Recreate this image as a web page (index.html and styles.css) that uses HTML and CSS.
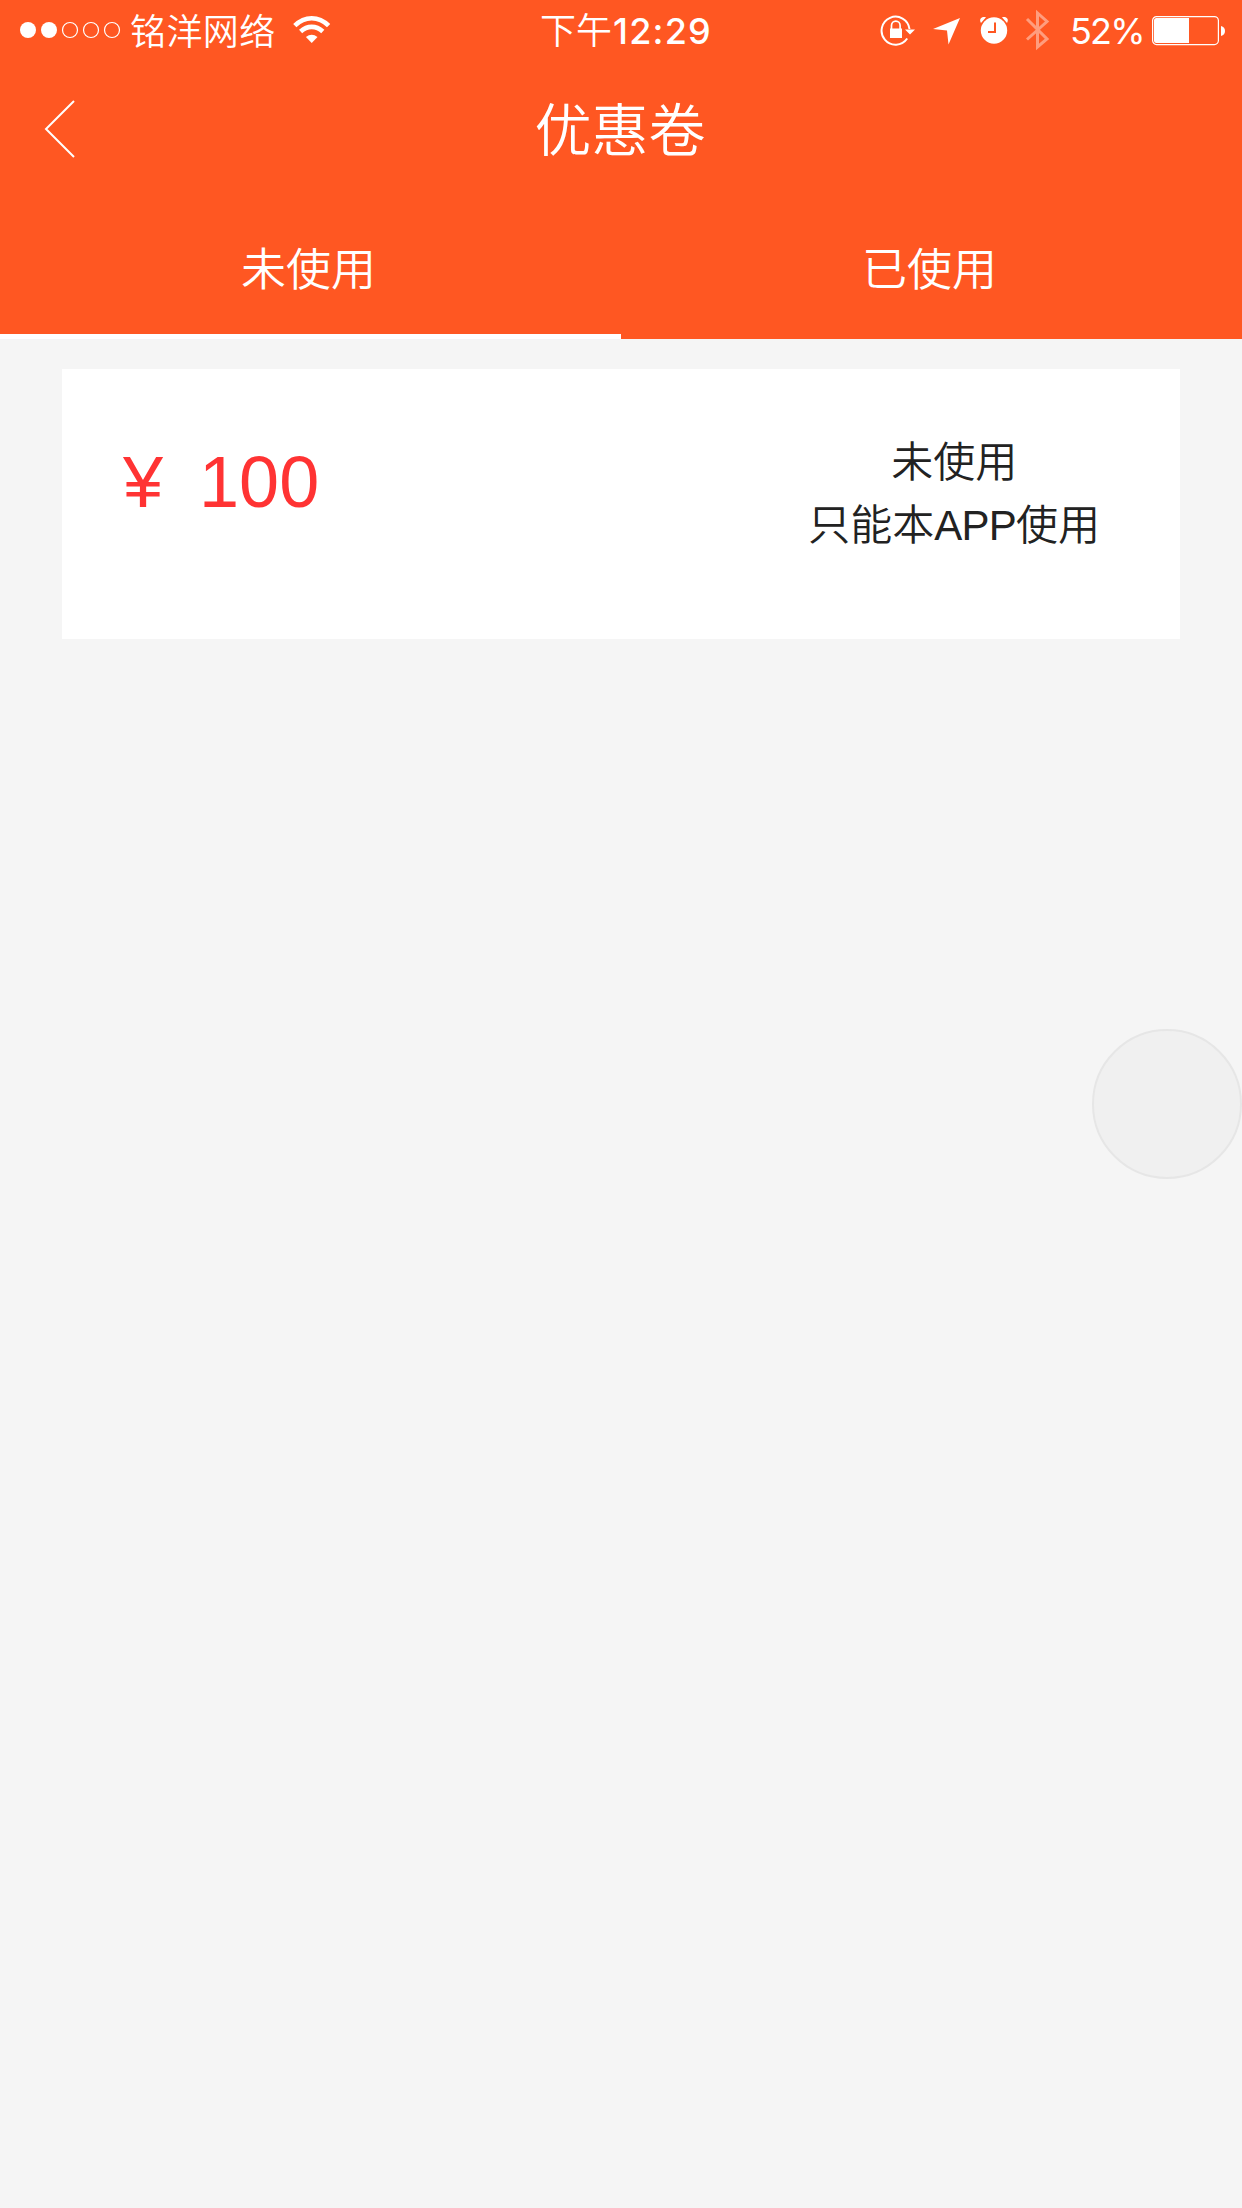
FILE: index.html
```html
<!DOCTYPE html>
<html lang="zh-CN">
<head>
<meta charset="utf-8">
<title>优惠卷</title>
<link rel="stylesheet" href="styles.css">
</head>
<body>
<header class="header">
  <div class="status">
    <div class="status-left">
      <svg class="signal" width="102" height="18" viewBox="0 0 102 18">
        <circle cx="9" cy="9" r="8" fill="#fff"/><circle cx="30" cy="9" r="8" fill="#fff"/>
        <g fill="none" stroke="#fff" stroke-width="1.200"><circle cx="51" cy="9" r="7.5"/><circle cx="72" cy="9" r="7.5"/><circle cx="93" cy="9" r="7.5"/></g>
      </svg>
      <span class="carrier">铭洋网络</span>
      <svg class="wifi" width="38" height="28" viewBox="0 0 38 28">
        <g fill="none" stroke="#fff" stroke-width="4.6"><path d="M1.8 9.7Q9.3 2.3 18.7 2.3T35.600 9.700"/><path d="M7.600 15.500Q12.600 10.900 18.700 10.900T29.800 15.500"/></g>
        <path d="M12.900 21Q18.700 16.300 24.500 21L18.700 27Z" fill="#fff"/>
      </svg>
    </div>
    <div class="time">下午<span class="clock">12:29</span></div>
    <div class="status-right">
      <svg class="indicators" width="170" height="44" viewBox="0 0 170 44">
        <g fill="none" stroke="#fff" stroke-width="2"><path d="M29.500 21A14 14 0 1 0 27.200 30.500"/><path d="M11.500 21V17.500a4.300 4.300 0 0 1 8.600 0V21" stroke-width="1.700"/></g>
        <path d="M10 20.500H22V30H10ZM25 21.500H35L30 26.500Z" fill="#fff"/>
        <path d="M53 21L80 10L68.500 36.500L67 22.500Z" fill="#fff"/>
        <circle cx="114" cy="22.500" r="13.200" fill="#fff"/>
        <path d="M101 15C98.500 10.500 102 8 106 9.200ZM127 15C129.500 10.500 126 8 122 9.200Z" fill="#fff"/>
        <path d="M115 14.500V24H108" fill="none" stroke="#ff5722" stroke-width="2"/>
        <path d="M147 11L167 31L157.500 39V5L167 13.500L147 31.500" fill="none" stroke="#fff" stroke-opacity=".42" stroke-width="3"/>
      </svg>
      <span class="percent">52%</span>
      <svg class="battery" width="74" height="30" viewBox="0 0 74 30">
        <rect x=".6" y=".6" width="65.800" height="28" rx="4" fill="none" stroke="#fff" stroke-width="1.200"/>
        <path d="M4.500 2H37V27H4.500Q2 27 2 24.500V4.500Q2 2 4.500 2Z" fill="#fff"/>
        <path d="M69 10Q73 11 73 15T69 20Z" fill="#fff"/>
      </svg>
    </div>
  </div>
  <div class="nav">
    <svg class="back" width="32" height="58" viewBox="0 0 32 58"><path d="M30 1L2 29L30 57" fill="none" stroke="#fff" stroke-width="2"/></svg>
    <h1 class="title">优惠卷</h1>
    <span></span>
  </div>
  <nav class="tabs">
    <div class="tab tab-active">未使用</div>
    <div class="tab">已使用</div>
  </nav>
</header>
<main class="content">
  <section class="coupon">
    <div class="price"><span>¥</span><span>100</span></div>
    <div class="info"><p>未使用</p><p>只能本<span class="latin">APP</span>使用</p></div>
  </section>
</main>
<div class="touch"></div>
</body>
</html>
```

FILE: styles.css
```css
* { box-sizing: border-box; }
body {
  margin: 0;
  min-height: 2208px;
  background: #f5f5f5;
  font-family: "Liberation Sans", "Noto Sans CJK SC", sans-serif;
  font-weight: 350;
}
svg { display: block; flex: none; }
.header { background: #ff5722; color: #fff; height: 339px; }
.status {
  height: 60px;
  display: grid;
  grid-template-columns: 540px 1fr 382px;
  grid-template-rows: 60px;
  font-family: Inter, "Noto Sans CJK SC", sans-serif;
  font-size: 36px;
  line-height: 60px;
  white-space: nowrap;
}
.status-left { display: flex; align-items: center; padding-left: 19px; }
.carrier { letter-spacing: .4px; width: 147px; margin-left: 9px; padding-top: 3px; }
.wifi { margin-left: 16px; }
.time { line-height: 62px; }
.clock { font-weight: 500; letter-spacing: 1.2px; padding-left: 1px; }
.status-right { display: flex; align-items: center; }
.indicators { margin-left: 20px; }
.percent { width: 71px; margin-left: 20px; padding-top: 2px; font-weight: 400; letter-spacing: -1.8px; }
.battery { margin-left: 11px; margin-top: 2px; }
.nav {
  height: 136px;
  display: grid;
  grid-template-columns: 1fr auto 1fr;
  align-items: center;
  padding-left: 44px;
  padding-right: 46px;
}
.title { margin: 0; padding-top: 5px; font-size: 57px; line-height: 76px; font-weight: 350; }
.back { margin-top: 1px; }
.tabs { height: 143px; display: flex; }
.tab {
  flex: 1;
  text-align: center;
  font-size: 45px;
  line-height: 149px;
  padding-right: 4px;
  border-bottom: 5px solid transparent;
}
.tab-active { border-bottom-color: #fff; }
.content { padding: 30px 62px; }
.coupon {
  height: 270px;
  background: #fff;
  display: flex;
  justify-content: space-between;
  padding: 61px 80px 0 61px;
}
.price {
  display: flex;
  gap: 36px;
  color: #f33;
  font-size: 72px;
  line-height: 104px;
}
.info { color: #222; font-size: 42px; text-align: center; line-height: 63px; padding-top: 1px; }
.info p { margin: 0; }
.latin { letter-spacing: -.8px; font-weight: 400; }
.touch {
  position: absolute;
  right: 0;
  top: 1029px;
  width: 150px;
  height: 150px;
  border: 2px solid #e6e6e6;
  border-radius: 50%;
  background: #f0f0f0;
}
```
